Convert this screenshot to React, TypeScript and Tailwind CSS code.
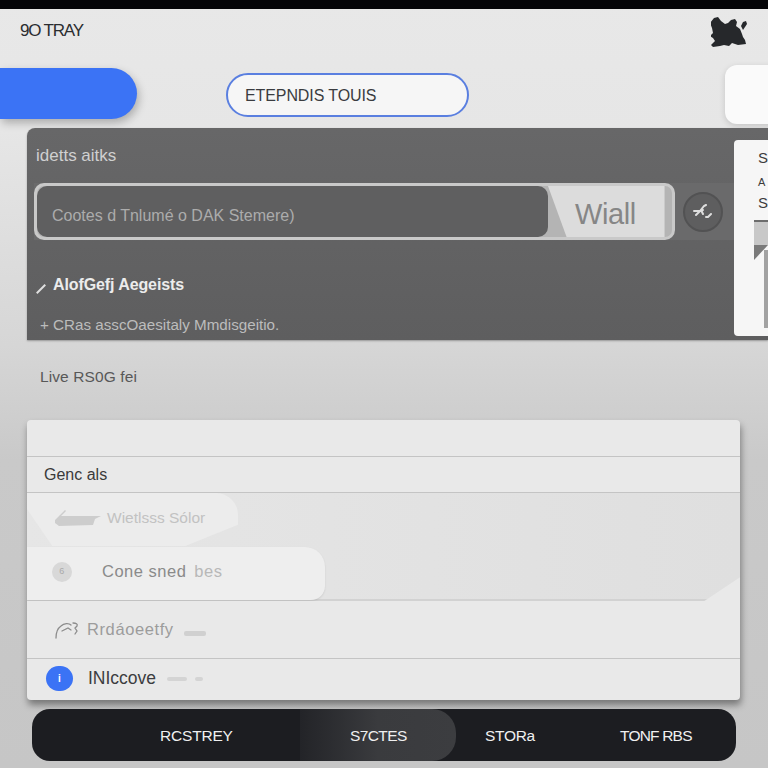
import { ReactNode } from 'react';

const sans = "font-['Liberation_Sans',Arial,sans-serif]";

// silhouette in the top right corner
function Logo() {
  return (
    <svg width="37" height="33" viewBox="0 0 37 33" fill="#26282b" className="shrink-0">
      <path d="M3 3l4-1 3 4 4 3 3-1 3-3 4-1 2 3-1 4 4 3 2 5 1 3 2 3 1 4-8 1-6-2-3 3-5-1-4 1-7 1-2-2 4-4-2-3-3-2 3-3-1-5-2-5z" />
      <path d="M30 11l2-4 3-1 1 3-2 3-2 3z" />
      <path d="M2 19l4 1-1 3-3 0z" />
    </svg>
  );
}

function NavItem({ label, className }: { label: string; className: string }) {
  return <div className={`flex items-center pt-[1px] text-[15.5px] text-[#f0f0f0] ${className}`}>{label}</div>;
}

function Row({ className, children }: { className: string; children?: ReactNode }) {
  return <div className={`flex items-center border-b border-[#c4c4c4] ${className}`}>{children}</div>;
}

export default function App() {
  return (
    <div className={`relative w-[768px] h-[768px] overflow-hidden bg-[linear-gradient(to_bottom,#e8e8e8_0%,#e6e6e6_17%,#d6d6d6_45%,#c9c9c9_60%,#c6c6c6_100%)] ${sans}`}>
      <div className="h-[9px] bg-[#050508]" />

      <header className="flex items-center justify-between h-[45px] pl-[20px] pr-[20px]">
        <span className="text-[17px] tracking-[-1.2px] text-[#2b2d30] mt-[-1px]">9O TRAY</span>
        <Logo />
      </header>

      <div className="flex items-center h-[70px] mt-[9px]">
        <div className="shrink-0 w-[137px] h-[51px] mt-[-10px] rounded-r-[26px] bg-[#3b73f5] shadow-[2px_4px_8px_rgba(0,0,0,0.25)]" />
        <div className="shrink-0 flex items-center w-[243px] h-[44px] ml-[89px] mt-[-7px] pl-[17px] pt-[3px] rounded-[22px] border-2 border-[#5a7fe0] bg-[#f6f6f6] text-[16px] tracking-[-0.1px] text-[#3a3c40]">
          ETEPNDIS TOUIS
        </div>
        <div className="shrink-0 w-[60px] h-[59px] ml-[256px] mt-[-8px] rounded-l-[12px] bg-[#fafafa] shadow-[0_2px_6px_rgba(0,0,0,0.15)]" />
      </div>

      <section className="relative ml-[27px] mt-[-5px] h-[212px] rounded-tl-[8px] bg-gradient-to-b from-[#676768] to-[#5e5e5f] shadow-[0_1px_2px_rgba(0,0,0,0.3)]">
        <div className="pl-[9px] pt-[18px] text-[17px] leading-[20px] text-[#d0d0d0]">idetts aitks</div>

        <div className="flex items-center mt-[17px] ml-[7px] bg-[#6a6a6b]">
          <div className="flex shrink-0 w-[641px] h-[57px] rounded-[10px] border-[3px] border-[#c9c9c9] bg-[#b4b4b4] overflow-hidden">
            <div className="flex items-center shrink-0 w-[511px] pl-[15px] pt-[8px] rounded-[10px] bg-[#5f5f60] text-[16px] text-[#acacac]">
              Cootes d Tnlumé o DAK Stemere)
            </div>
            <div className="flex flex-1 items-center pl-[27px] pt-[7px] text-[29px] tracking-[-0.4px] text-[#868686] bg-[#dcdcdc] [clip-path:polygon(0_0,94%_0,94%_100%,15%_100%)]">
              Wiall
            </div>
          </div>
          <div className="flex items-center justify-center shrink-0 w-[40px] h-[40px] ml-[8px] rounded-full border-2 border-[#525253] bg-[#5e5e5f]">
            <svg width="20" height="15" viewBox="0 0 20 15" fill="none" stroke="#dedede" strokeWidth="2" strokeLinecap="round">
              <path d="M1 7h6l3-1M3 11l4-4 4-5 2-1M8 6l2 4M13 13l2 0 3-3" />
            </svg>
          </div>
        </div>

        <div className="flex items-center mt-[33px] ml-[8px] text-[16px] font-bold tracking-[-0.1px] text-[#ececec]">
          <span className="w-[12px] h-[2px] mr-[6px] mt-[8px] bg-[#e0e0e0] -rotate-45" />
          AlofGefj Aegeists
        </div>
        <div className="ml-[13px] mt-[18px] text-[15.2px] leading-[20px] text-[#bcbcbc]">
          + CRas asscOaesitaly Mmdisgeitio.
        </div>

        <aside className="absolute right-0 top-[12px] flex flex-col w-[34px] h-[196px] pl-[24px] pt-[8px] rounded-l-[4px] bg-[#f6f6f6] text-[#3c3c3c] overflow-hidden">
          <span className="text-[15px] leading-[20px]">S</span>
          <span className="text-[11px] leading-[20px] mt-[4px]">A</span>
          <span className="text-[15px] leading-[20px] mt-[1px]">S</span>
          <svg width="14" height="108" viewBox="0 0 14 108" className="absolute left-[20px] top-[80px]">
            <rect width="14" height="2" fill="#6c6c6c" />
            <rect y="2" width="14" height="23" fill="#c8c8c8" />
            <path d="M0 25h14L0 40z" fill="#7a7a7a" />
            <path d="M10 30h4v78h-4z" fill="#a2a2a2" />
          </svg>
        </aside>
      </section>

      <div className="ml-[40px] mt-[27px] h-[20px] text-[15.5px] tracking-[0.1px] leading-[20px] text-[#585858]">Live RS0G fei</div>

      <section className="ml-[27px] mt-[33px] w-[713px] h-[280px] rounded-[4px] bg-[#e9e9e9] shadow-[1px_5px_7px_rgba(0,0,0,0.4)] overflow-hidden">
        <Row className="h-[37px]" />
        <Row className="h-[36px] pl-[17px] pt-[1px] text-[16px] text-[#3a3a3a]">Genc als</Row>

        <div className="relative h-[108px] bg-gradient-to-r from-[#e6e6e6] to-[#dfdfdf] border-b-2 border-[#d2d2d2] [clip-path:polygon(0_0,100%_0,100%_78%,95%_100%,0_100%)]">
          <div className="flex items-center w-[211px] h-[53px] pl-[28px] pb-[4px] rounded-r-[22px] bg-[#ececec] text-[15.5px] text-[#c2c2c2] [clip-path:polygon(0_30%,0_0,100%_0,100%_60%,75%_100%,12%_100%)]">
            <svg width="46" height="16" viewBox="0 0 46 16" fill="#cdcdcd" className="mr-[6px] shrink-0">
              <path d="M0 10l5-5 5-5 1 1-5 5h40l-6 3-2 6-34 1-4-3z" />
            </svg>
            Wietlsss Sólor
          </div>
          <div className="flex items-center w-[298px] h-[53px] mt-[1px] pl-[25px] pb-[4px] rounded-tr-[20px] rounded-br-[14px] bg-[#eeeeee] shadow-[0_1px_2px_rgba(0,0,0,0.1)] text-[16.5px] tracking-[0.5px] text-[#8a8a8a]">
            <span className="flex items-center justify-center w-[20px] h-[20px] mr-[30px] rounded-full bg-[#d8d8d8] text-[9px] text-[#aaa]">6</span>
            Cone sned <span className="ml-[8px] text-[#b8b8b8]">bes</span>
          </div>
        </div>

        <Row className="h-[58px] pl-[28px] text-[16.5px] tracking-[0.6px] text-[#9c9c9c]">
          <svg width="25" height="18" viewBox="0 0 25 18" fill="none" stroke="#8c8c8c" strokeWidth="1.3" strokeLinecap="round" className="mr-[7px]">
            <path d="M1 17c0-6 2-10 5-12 3-3 8-3 10-1M7 10l6-3 3 2M18 2c3 0 5 1 4 3l-2 2 2 3-2 3" />
          </svg>
          Rrdáoeetfy
          <span className="w-[22px] h-[5px] ml-[10px] mt-[8px] rounded-[2px] bg-[#d0d0d0]" />
        </Row>

        <div className="flex items-center h-[41px] pl-[19px] pb-[2px] text-[17.5px] text-[#3c3d40]">
          <span className="flex items-center justify-center w-[27px] h-[25px] mr-[15px] rounded-full bg-[#3b73f5] text-[10px] font-bold text-white">i</span>
          INIccove
          <span className="w-[20px] h-[4px] ml-[11px] rounded-[2px] bg-[#d4d4d4]" />
          <span className="w-[8px] h-[4px] ml-[8px] rounded-[2px] bg-[#d4d4d4]" />
        </div>
      </section>

      <nav className="flex ml-[32px] mt-[9px] w-[704px] h-[52px] rounded-[18px] bg-[#1c1d21] overflow-hidden">
        <NavItem label="RCSTREY" className="w-[268px] pl-[128px] tracking-[-0.2px]" />
        <NavItem label="S7CTES" className="w-[156px] pl-[50px] tracking-[-0.6px] rounded-r-[24px] bg-gradient-to-r from-[#232428] via-[#3a3b3e] to-[#3c3d40]" />
        <NavItem label="STORa" className="w-[164px] pl-[29px] tracking-[-0.3px]" />
        <NavItem label="TONF RBS" className="flex-1 tracking-[-0.8px]" />
      </nav>
    </div>
  );
}
